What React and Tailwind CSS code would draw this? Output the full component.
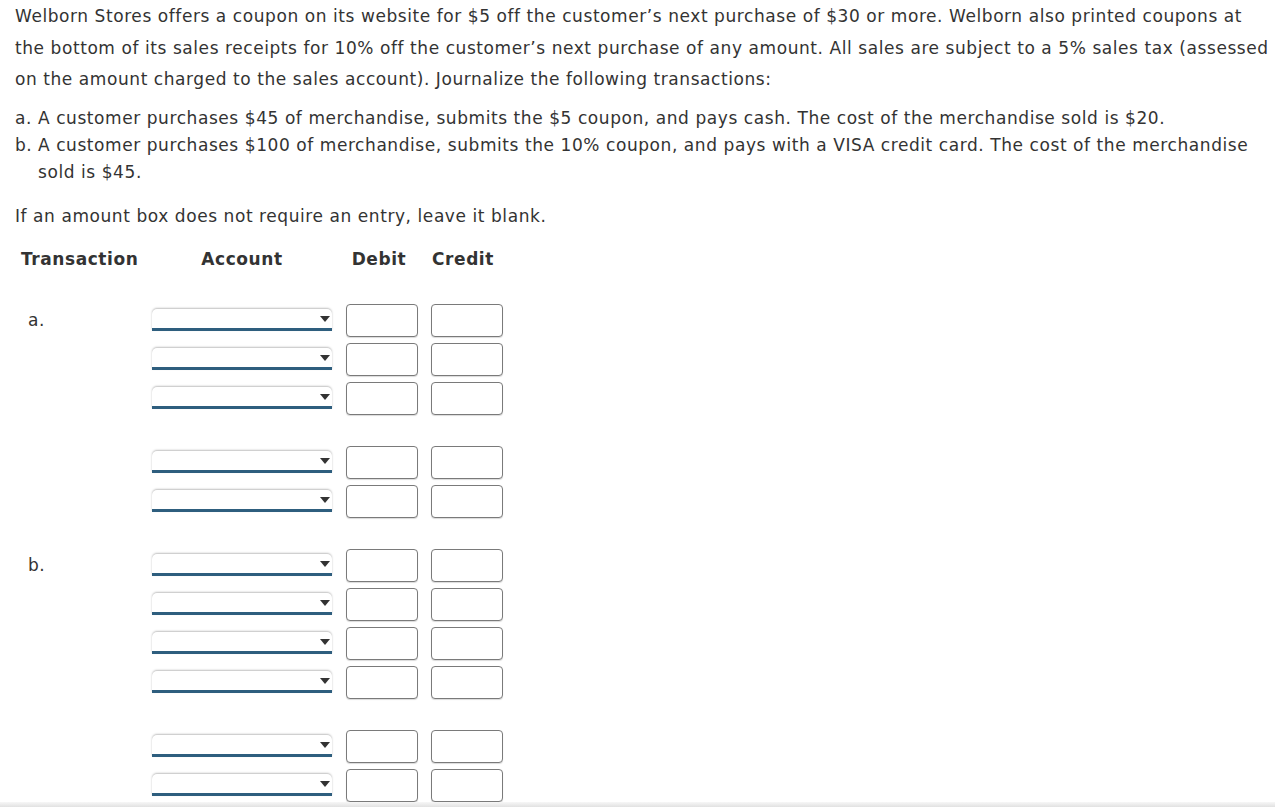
import React from "react";

const groups = [
  { label: "a.", rows: 3 },
  { label: "", rows: 2 },
  { label: "b.", rows: 4 },
  { label: "", rows: 2 },
];

function AccountSelect() {
  return (
    <div className="relative w-[180px] h-[22px] bg-white rounded-t-[5px] border-b-[3px] border-[#2e5e7e] shadow-[0_-1px_2px_rgba(0,0,0,0.25)]">
      <span className="absolute right-[2px] top-[7px] w-0 h-0 border-l-[5px] border-r-[5px] border-t-[6px] border-l-transparent border-r-transparent border-t-[#333]" />
    </div>
  );
}

function AmountBox() {
  return (
    <div className="w-[72px] h-[33px] bg-white rounded-[4px] border border-[#7a7a7a] shadow-[0_1px_1px_rgba(0,0,0,0.15)]" />
  );
}

export default function App() {
  return (
    <div className="h-screen overflow-hidden bg-white flex flex-col text-[#333] text-[17px] tracking-[0.57px]" style={{ fontFamily: '"DejaVu Sans", Verdana, sans-serif' }}>
      <div className="flex-1 pl-[15px] pr-[1px] pt-[1px]">
        <p className="leading-[31.5px]">
          Welborn Stores offers a coupon on its website for $5 off the customer’s next purchase of $30 or more. Welborn also printed coupons at the bottom of its sales receipts for 10% off the customer’s next purchase of any amount. All sales are subject to a 5% sales tax (assessed on the amount charged to the sales account). Journalize the following transactions:
        </p>

        <ol className="mt-[9px] leading-[27px]">
          <li className="flex">
            <span className="w-[23px] shrink-0">a.</span>
            <span>A customer purchases $45 of merchandise, submits the $5 coupon, and pays cash. The cost of the merchandise sold is $20.</span>
          </li>
          <li className="flex">
            <span className="w-[23px] shrink-0">b.</span>
            <span>A customer purchases $100 of merchandise, submits the 10% coupon, and pays with a VISA credit card. The cost of the merchandise sold is $45.</span>
          </li>
        </ol>

        <p className="mt-[17px] leading-[27px]">If an amount box does not require an entry, leave it blank.</p>

        {/* Header */}
        <div className="mt-[16px] flex items-center leading-[27px] font-bold">
          <div className="w-[137px] pl-[6px]">Transaction</div>
          <div className="w-[180px] text-center">Account</div>
          <div className="w-[72px] ml-[11px] text-center">Debit</div>
          <div className="w-[72px] ml-[12px] text-center">Credit</div>
        </div>

        {/* Journal rows */}
        <div className="mt-[31px] flex flex-col gap-[31px]">
          {groups.map((g, gi) => (
            <div key={gi} className="flex flex-col gap-[6px]">
              {Array.from({ length: g.rows }).map((_, ri) => (
                <div key={ri} className="flex items-center h-[33px]">
                  <div className="w-[137px] pl-[13px] pt-[2px]">{ri === 0 ? g.label : ""}</div>
                  <AccountSelect />
                  <div className="ml-[14px]">
                    <AmountBox />
                  </div>
                  <div className="ml-[13px]">
                    <AmountBox />
                  </div>
                </div>
              ))}
            </div>
          ))}
        </div>
      </div>
      <div className="h-[7px] shrink-0 bg-gradient-to-b from-[#f7f7f7] to-[#d9d9d9]" />
    </div>
  );
}
